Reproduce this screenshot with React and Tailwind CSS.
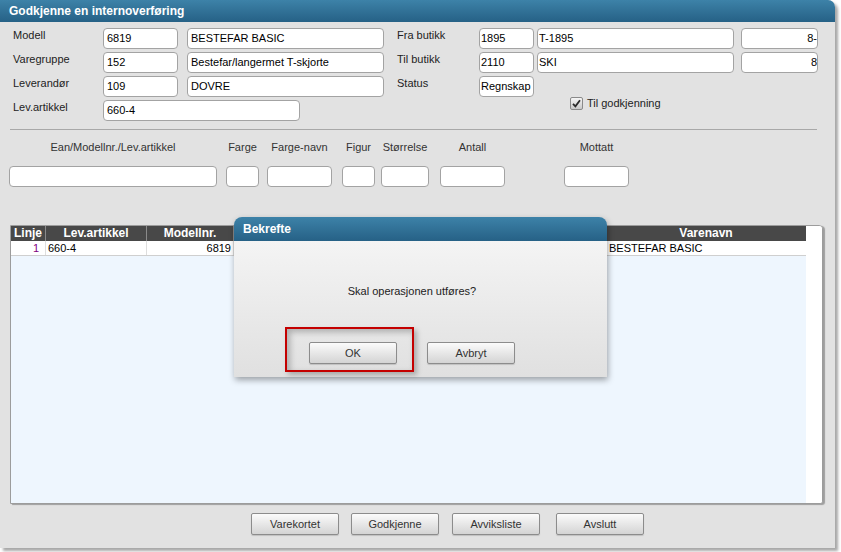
import React from "react";

function Input({ w, value = "", right = false, pl = "pl-[3px]" }) {
  return (
    <div
      className={`${w} h-[21px] bg-white border border-[#a3a3a3] rounded-[4px] flex items-center overflow-hidden text-[11px] text-black ${
        right ? "justify-end pr-0" : pl
      }`}
    >
      <span className="whitespace-nowrap">{value}</span>
    </div>
  );
}

function Label({ w, children, className = "" }) {
  return (
    <div className={`${w} pt-[1px] text-[11px] leading-[13px] text-[#222] ${className}`}>{children}</div>
  );
}

function Btn({ children, className = "" }) {
  return (
    <div
      className={`w-[88px] h-[22px] flex items-center justify-center border border-[#8c8c8c] rounded-[2px] bg-gradient-to-b from-[#fbfbfb] to-[#d4d4d4] text-[11px] text-[#333] shadow-[0_1px_1px_rgba(0,0,0,0.15)] ${className}`}
    >
      {children}
    </div>
  );
}

function Col({ w, ml, label, children }) {
  return (
    <div className={`${w} ${ml} flex flex-col items-center`}>
      <div className="h-[13px] leading-[13px] text-[11px] text-[#333] whitespace-nowrap">{label}</div>
      <div className="mt-[12px]">{children}</div>
    </div>
  );
}

export default function App() {
  return (
    <div className="w-[841px] h-[552px] bg-white relative overflow-hidden font-['Liberation_Sans',Arial,sans-serif]">
      <div className="w-[835px] h-[548px] bg-[#e2e2e2] rounded-tr-[7px] shadow-[3px_3px_3px_rgba(0,0,0,0.35)] flex flex-col">
        {/* Title bar */}
        <div className="h-[22px] rounded-tr-[7px] bg-gradient-to-b from-[#3d82a8] to-[#266186] flex items-center pl-[9px]">
          <span className="text-white font-bold text-[12px]">Godkjenne en internoverføring</span>
        </div>

        {/* Header fields */}
        <div className="pt-[6px] pl-[13px] flex flex-col">
          <div className="flex h-[21px] mb-[3px]">
            <Label w="w-[90px]">Modell</Label>
            <Input w="w-[75px]" value="6819" />
            <div className="ml-[9px]"><Input w="w-[197px]" value="BESTEFAR BASIC" /></div>
            <Label w="w-[82px]" className="ml-[13px]">Fra butikk</Label>
            <Input w="w-[55px]" value="1895" pl="pl-[1px]" />
            <div className="ml-[3px]"><Input w="w-[197px]" value="T-1895" pl="pl-[1px]" /></div>
            <div className="ml-[7px]"><Input w="w-[77px]" value="8-" right /></div>
          </div>
          <div className="flex h-[21px] mb-[3px]">
            <Label w="w-[90px]">Varegruppe</Label>
            <Input w="w-[75px]" value="152" />
            <div className="ml-[9px]"><Input w="w-[197px]" value="Bestefar/langermet T-skjorte" /></div>
            <Label w="w-[82px]" className="ml-[13px]">Til butikk</Label>
            <Input w="w-[55px]" value="2110" pl="pl-[1px]" />
            <div className="ml-[3px]"><Input w="w-[197px]" value="SKI" pl="pl-[1px]" /></div>
            <div className="ml-[7px]"><Input w="w-[77px]" value="8" right /></div>
          </div>
          <div className="flex h-[21px] mb-[3px]">
            <Label w="w-[90px]">Leverandør</Label>
            <Input w="w-[75px]" value="109" />
            <div className="ml-[9px]"><Input w="w-[197px]" value="DOVRE" /></div>
            <Label w="w-[82px]" className="ml-[13px]">Status</Label>
            <Input w="w-[55px]" value="Regnskap" pl="pl-[1px]" />
          </div>
          <div className="flex h-[21px] mb-[3px]">
            <Label w="w-[90px]">Lev.artikkel</Label>
            <Input w="w-[197px]" value="660-4" />
            <div className="ml-[270px] -mt-[3px] flex items-start h-[14px]">
              <div className="w-[13px] h-[13px] rounded-[2px] border border-[#8a8a8a] bg-gradient-to-b from-[#f6f6f6] to-[#c9c9c9] flex items-center justify-center">
                <svg width="9" height="9" viewBox="0 0 9 9">
                  <path d="M1 4.8 L3.4 7.3 L8 1.2" fill="none" stroke="#2a2a2a" strokeWidth="1.8" />
                </svg>
              </div>
              <span className="ml-[4px] text-[11px] leading-[13px] text-[#222]">Til godkjenning</span>
            </div>
          </div>
        </div>

        {/* Separator */}
        <div className="ml-[10px] w-[807px] h-px bg-[#a8a8a8] mt-[5px]" />

        {/* Search columns */}
        <div className="flex pl-[9px] mt-[11px]">
          <Col w="w-[208px]" ml="" label="Ean/Modellnr./Lev.artikkel"><Input w="w-[208px]" /></Col>
          <Col w="w-[33px]" ml="ml-[9px]" label="Farge"><Input w="w-[33px]" /></Col>
          <Col w="w-[65px]" ml="ml-[8px]" label="Farge-navn"><Input w="w-[65px]" /></Col>
          <Col w="w-[33px]" ml="ml-[10px]" label="Figur"><Input w="w-[33px]" /></Col>
          <Col w="w-[48px]" ml="ml-[6px]" label="Størrelse"><Input w="w-[48px]" /></Col>
          <Col w="w-[65px]" ml="ml-[11px]" label="Antall"><Input w="w-[65px]" /></Col>
          <Col w="w-[65px]" ml="ml-[59px]" label="Mottatt"><Input w="w-[65px]" /></Col>
        </div>

        {/* Table */}
        <div className="ml-[10px] mt-[38px] w-[813px] h-[279px] border border-[#9c9c9c] rounded-tr-[4px] rounded-br-[3px] shadow-[2px_1px_1px_rgba(0,0,0,0.3)] flex bg-white overflow-hidden">
          <div className="w-[795px] flex flex-col">
            <div className="h-[15px] flex bg-[#484848] text-white font-bold text-[12px] leading-[15px]">
              <div className="w-[35px] border-r border-[#8a8a8a] text-center">Linje</div>
              <div className="w-[101px] border-r border-[#8a8a8a] text-center">Lev.artikkel</div>
              <div className="w-[87px] border-r border-[#8a8a8a] text-center">Modellnr.</div>
              <div className="w-[372px] border-r border-[#8a8a8a]"></div>
              <div className="w-[200px] text-center">Varenavn</div>
            </div>
            <div className="h-[15px] flex bg-white border-b border-[#cfcfcf] text-[11px] leading-[14px] text-black">
              <div className="w-[35px] border-r border-[#dedede] text-right pr-[6px] text-[#800080]">1</div>
              <div className="w-[101px] border-r border-[#dedede] pl-[2px]">660-4</div>
              <div className="w-[87px] border-r border-[#dedede] text-right pr-[2px]">6819</div>
              <div className="w-[372px] border-r border-[#dedede]"></div>
              <div className="w-[200px] pl-[3px]">BESTEFAR BASIC</div>
            </div>
            <div className="flex-1 bg-[#eef6fe]" />
          </div>
          <div className="flex-1 bg-white" />
        </div>

        {/* Bottom buttons */}
        <div className="flex mt-[9px] ml-[251px]">
          <Btn>Varekortet</Btn>
          <Btn className="ml-[12px]">Godkjenne</Btn>
          <Btn className="ml-[13px]">Avviksliste</Btn>
          <Btn className="ml-[16px]">Avslutt</Btn>
        </div>
      </div>

      {/* Dialog */}
      <div className="absolute left-[234px] top-[217px] w-[373px] h-[160px] rounded-t-[8px] shadow-[1px_3px_6px_rgba(0,0,0,0.35)] flex flex-col">
        <div className="h-[24px] rounded-t-[8px] bg-gradient-to-b from-[#3d82a8] to-[#266186] flex items-center pl-[9px]">
          <span className="text-white font-bold text-[12px]">Bekrefte</span>
        </div>
        <div className="flex-1 bg-gradient-to-b from-[#f4f4f4] to-[#e0e0e0] flex flex-col w-full">
          <div className="w-[356px] flex justify-center mt-[44px] text-[11px] leading-[13px] text-[#222]">
            Skal operasjonen utføres?
          </div>
          <div className="w-[356px] flex justify-center mt-[44px]">
            <Btn className="h-[21px]">OK</Btn>
            <Btn className="ml-[30px] h-[21px]">Avbryt</Btn>
          </div>
        </div>
      </div>

      {/* Annotation highlight */}
      <div className="absolute left-[285px] top-[327px] w-[129px] h-[45px] border-2 border-[#c40000] shadow-[3px_3px_5px_rgba(0,0,0,0.25),inset_3px_3px_6px_rgba(0,0,0,0.25)]" />
    </div>
  );
}
